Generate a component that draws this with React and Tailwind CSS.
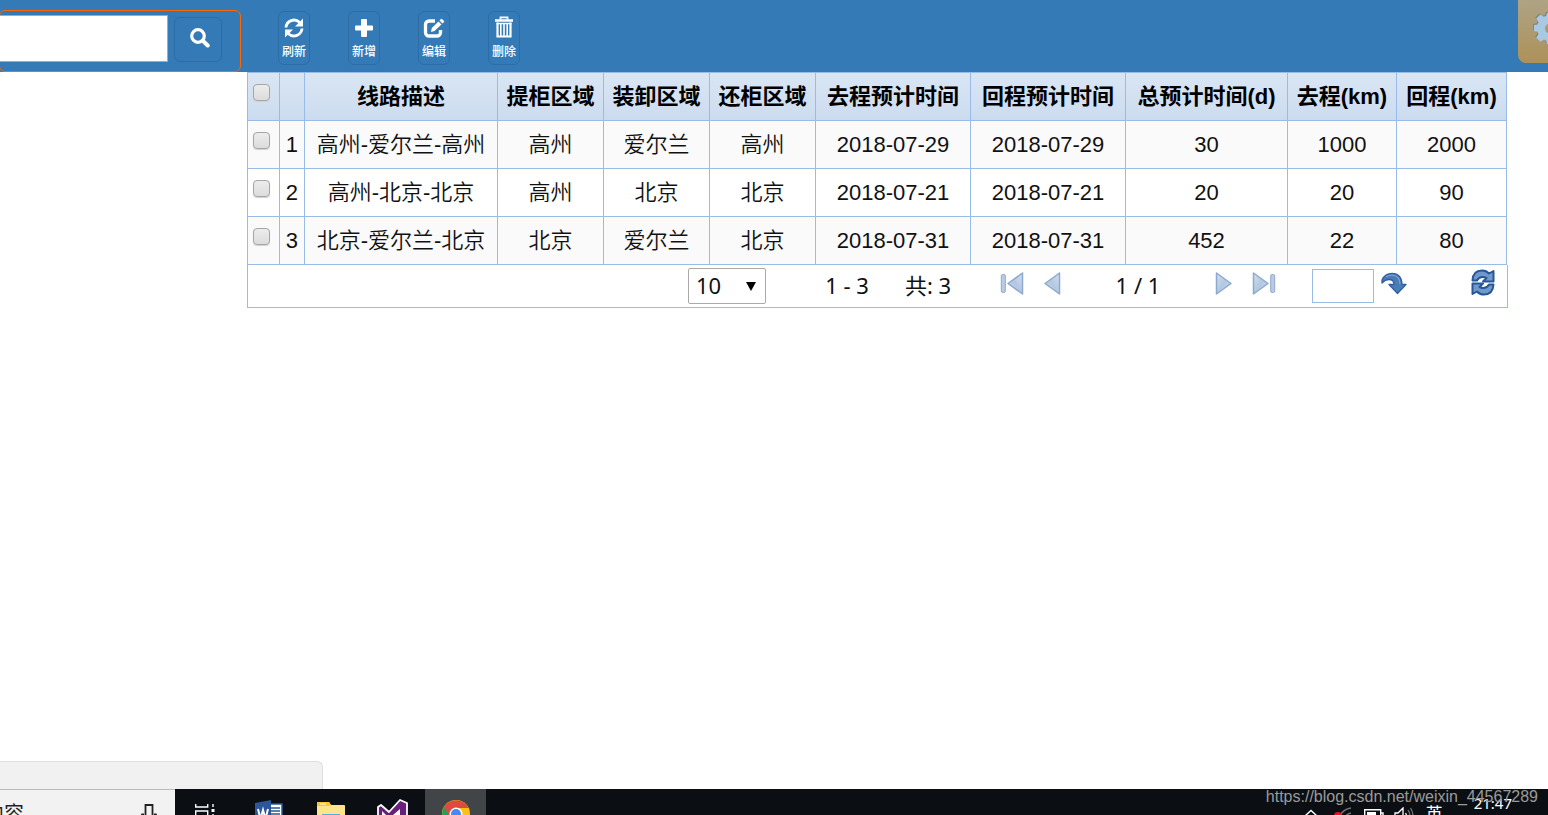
import { useState } from "react";

const COLUMNS = [
  { key: "desc", label: "线路描述", width: 193 },
  { key: "pickup", label: "提柜区域", width: 106 },
  { key: "load", label: "装卸区域", width: 106 },
  { key: "back", label: "还柜区域", width: 106 },
  { key: "goTime", label: "去程预计时间", width: 155 },
  { key: "backTime", label: "回程预计时间", width: 155 },
  { key: "total", label: "总预计时间(d)", width: 162 },
  { key: "goKm", label: "去程(km)", width: 109 },
  { key: "backKm", label: "回程(km)", width: 110 },
];
const TOTAL_WIDTH = 1259;

const ROWS = [
  { id: 1, desc: "高州-爱尔兰-高州", pickup: "高州", load: "爱尔兰", back: "高州", goTime: "2018-07-29", backTime: "2018-07-29", total: 30, goKm: 1000, backKm: 2000 },
  { id: 2, desc: "高州-北京-北京", pickup: "高州", load: "北京", back: "北京", goTime: "2018-07-21", backTime: "2018-07-21", total: 20, goKm: 20, backKm: 90 },
  { id: 3, desc: "北京-爱尔兰-北京", pickup: "北京", load: "爱尔兰", back: "北京", goTime: "2018-07-31", backTime: "2018-07-31", total: 452, goKm: 22, backKm: 80 },
];

const TOOLS = [
  { label: "刷新", Icon: RefreshIcon },
  { label: "新增", Icon: PlusIcon },
  { label: "编辑", Icon: EditIcon },
  { label: "删除", Icon: TrashIcon },
];

export default function App() {
  return (
    <div className="flex min-h-screen flex-col overflow-hidden bg-white font-['Liberation_Sans','Noto_Sans_CJK_SC',sans-serif] text-black">
      <Header />
      <main className="ml-[247px] mr-10 flex-1">
        <RouteTable />
        <Pager />
      </main>
      <div className="h-7 w-[323px] rounded-tr-md border-r border-t border-[#dedede] bg-[#f1f1f1]" />
      <Taskbar />
    </div>
  );
}

function Header() {
  return (
    <header className="flex h-18 items-start bg-[#337ab7]">
      <form className="-ml-px mt-2.5 flex h-[62px] w-[242px] items-start rounded-md border border-[#f60] pt-1" onSubmit={(e) => e.preventDefault()}>
        <input type="text" aria-label="搜索内容" className="h-[47px] w-42 border border-l-0 border-[#a9a9a9] bg-white px-2 text-[22px] outline-none" />
        <button type="submit" aria-label="搜索" className="ml-1.5 mt-0.5 flex h-[45px] w-12 items-start justify-center rounded-md border border-[#2e6da4] pl-1 pt-2.5 text-white">
          <SearchIcon />
        </button>
      </form>
      <div className="ml-[37px] mt-[11px] flex gap-[38px]">
        {TOOLS.map(({ label, Icon }) => (
          <button key={label} type="button" className="flex h-[54px] w-8 flex-col items-center rounded-md border border-[#2e6da4] pt-1.5 text-xs font-medium text-white">
            <Icon />
            <span className="mt-1.5 whitespace-nowrap leading-4">{label}</span>
          </button>
        ))}
      </div>
      <button type="button" aria-label="设置" className="-mr-[34px] ml-auto flex h-[63px] w-16 justify-center rounded-b-lg bg-linear-to-b from-[#aea384] to-[#ad9158] pt-3">
        <GearIcon />
      </button>
    </header>
  );
}

function Check({ label }) {
  return (
    <input type="checkbox" aria-label={label}
      className="block size-[17px] appearance-none rounded-[4px] border border-[#a6a6a6] bg-linear-to-b from-[#ececec] to-[#dcdcdc] shadow-[0_1px_1px_#d0d0d0] checked:bg-[#337ab7]" />
  );
}

function RouteTable() {
  return (
    <div className="pr-px">
      <table className="w-full table-fixed border-collapse text-center text-[22px] leading-8">
        <colgroup>
          <col style={{ width: `${(32 / TOTAL_WIDTH) * 100}%` }} />
          <col style={{ width: `${(25 / TOTAL_WIDTH) * 100}%` }} />
          {COLUMNS.map((c) => <col key={c.key} style={{ width: `${(c.width / TOTAL_WIDTH) * 100}%` }} />)}
        </colgroup>
        <thead>
          <tr className="h-12 bg-linear-to-b from-[#dae6f4] to-[#cbdbef]">
            <th className="border border-[#99bbe8] pl-[5px] pt-[11px] align-top"><Check label="全选" /></th>
            <th className="border border-[#99bbe8]" />
            {COLUMNS.map((c) => <th key={c.key} className="whitespace-nowrap border border-[#99bbe8] font-bold">{c.label}</th>)}
          </tr>
        </thead>
        <tbody>
          {ROWS.map((row) => (
            <tr key={row.id} className="h-12 text-[#111] odd:bg-[#fafafa]">
              <td className="border border-[#99bbe8] pl-[5px] pt-[11px] align-top"><Check label={row.desc} /></td>
              <td className="border border-[#99bbe8]">{row.id}</td>
              {COLUMNS.map((c) => <td key={c.key} className="whitespace-nowrap border border-[#99bbe8] font-[350]">{row[c.key]}</td>)}
            </tr>
          ))}
        </tbody>
      </table>
    </div>
  );
}

function Pager() {
  const [size, setSize] = useState("10");
  return (
    <div className="flex h-[43px] items-start justify-end border-x border-b border-[#99bbe8] pr-3 pt-[3px] font-['Noto_Sans','Noto_Sans_CJK_SC',sans-serif] text-[22px] leading-[34px] text-[#111]">
      <div className="relative">
        <select aria-label="每页条数" value={size} onChange={(e) => setSize(e.target.value)}
          className="h-9 w-[78px] appearance-none rounded-xs border border-[#a9a9a9] bg-white pb-0.5 pl-[7px] leading-8 outline-none">
          <option>10</option>
          <option>20</option>
          <option>50</option>
        </select>
        <svg viewBox="0 0 10 9" className="pointer-events-none absolute right-2.5 top-3.5 h-[9px] w-2.5"><path d="M0 0h10L5 9z" /></svg>
      </div>
      <span className="ml-14 w-[50px] whitespace-nowrap text-center">1 - 3</span>
      <span className="ml-8 w-12 whitespace-nowrap text-center">共: 3</span>
      <button type="button" aria-label="首页" className="ml-12 mt-1"><PageIcon bar flip /></button>
      <button type="button" aria-label="上一页" className="ml-5 mt-1"><PageIcon flip /></button>
      <span className="mx-[53px] w-12 whitespace-nowrap text-center">1 / 1</span>
      <button type="button" aria-label="下一页" className="mt-1"><PageIcon /></button>
      <button type="button" aria-label="末页" className="ml-5 mt-1"><PageIcon bar /></button>
      <input type="text" aria-label="页码" className="ml-9 mt-px h-[34px] w-[62px] border border-[#99bbe8] px-1 outline-none" />
      <button type="button" aria-label="跳转" className="ml-[7px] mt-1"><JumpIcon /></button>
      <button type="button" aria-label="重新加载" className="ml-16 mt-px"><ReloadIcon /></button>
    </div>
  );
}

/** Desktop strip; everything hangs below its lower edge. */
function Taskbar() {
  return (
    <footer className="flex h-[26px] items-start overflow-hidden bg-[#0b0f14] text-white">
      <div className="flex h-full w-[175px] items-start justify-between border-t border-[#b8bcbc] bg-[#f2f2f2] text-[#222]">
        <span className="-ml-4 mt-3 text-[20px] leading-6">内容</span>
        <svg viewBox="0 0 16 24" className="mr-[18px] mt-3.5 h-6 w-4" fill="none" stroke="currentColor" strokeWidth="1.800">
          <path d="M4.500 12V1h7v11M4.500 10v4M.5 10.500h2.500M13 10.500h2.500M1 10v4a7 7 0 0 0 14 0v-4" />
        </svg>
      </div>
      <svg viewBox="0 0 22 20" className="ml-5 mt-3.5 h-5 w-[22px]" fill="none" stroke="#fff" strokeWidth="1.4">
        <path d="M.7 1v3h12V1M.7 19V8h12v11M18 1v3M18 11v8" />
        <path d="M16.5 6h3v3h-3z" fill="#fff" stroke="none" />
      </svg>
      <WordIcon />
      <FolderIcon />
      <StudioIcon />
      <div className="ml-4 flex h-full w-[61px] justify-center bg-[#424548] pt-[11px]"><ChromeIcon /></div>
      <Tray />
    </footer>
  );
}

function Tray() {
  return (
    <div className="relative ml-auto flex h-full items-start pr-9">
      <svg viewBox="0 0 12 8" className="mr-[17px] mt-5 h-2 w-3" fill="none" stroke="#fff" strokeWidth="1.4"><path d="m.5 6.5 5.5-5 5.5 5" /></svg>
      <svg viewBox="0 0 18 18" className="mr-3 mt-[18px] size-[18px]" fill="none" stroke="#777" strokeWidth="1.4">
        <path d="M4 16A15 15 0 0 1 17 1M9 16A10 10 0 0 1 17 6" />
        <circle cx="4" cy="9" r="4" fill="#e81123" stroke="none" />
      </svg>
      <svg viewBox="0 0 20 12" className="mr-2.5 mt-5 h-3 w-5" fill="none" stroke="#fff" strokeWidth="1.4">
        <path d="M.7.7h16v10H.7zM17 4h2v4h-2" />
        <path d="M3 3h9v6H3z" fill="#fff" stroke="none" />
      </svg>
      <svg viewBox="0 0 20 18" className="mr-3 mt-[18px] h-[18px] w-5" fill="none" stroke="#fff" strokeWidth="1.3">
        <path d="M1 6h3l5-5v16l-5-5H1zM11.500 6q2 3 0 6" />
        <path d="M14 3q4 6 0 12M16.500 1q5 8 0 16" stroke="#777" />
      </svg>
      <span className="mr-[31px] mt-3.5 text-[17px] leading-6">英</span>
      <span className="mt-1 font-['Noto_Sans',sans-serif] text-[15px] leading-5">21:47</span>
      <span className="absolute right-2.5 top-0 whitespace-nowrap text-base leading-4 text-[#9b9b9b]">https://blog.csdn.net/weixin_44567289</span>
    </div>
  );
}

function SearchIcon() {
  return (
    <svg viewBox="0 0 20 20" className="size-5" fill="none" stroke="currentColor">
      <circle cx="8" cy="8" r="6.300" strokeWidth="3.200" />
      <path d="m12.800 12.800 4.900 4.700" strokeWidth="4" strokeLinecap="round" />
    </svg>
  );
}

function RefreshIcon() {
  return (
    <svg viewBox="0 0 20 20" className="h-5 w-5 shrink-0" fill="none" stroke="currentColor" strokeWidth="2.8">
      <path d="M2 9.500A8 8 0 0 1 15.500 4.300M18 10.500A8 8 0 0 1 4.500 15.700" />
      <path d="M19 .500V8.500h-8zM1 19.500v-8h8z" fill="currentColor" stroke="none" />
    </svg>
  );
}

function PlusIcon() {
  return (
    <svg viewBox="0 0 20 20" className="h-5 w-5 shrink-0" fill="currentColor">
      <path d="M8 1h4a1 1 0 0 1 1 1v5.500h5a1 1 0 0 1 1 1v3a1 1 0 0 1-1 1h-5V18a1 1 0 0 1-1 1H8a1 1 0 0 1-1-1v-5.500H2a1 1 0 0 1-1-1v-3a1 1 0 0 1 1-1h5V2a1 1 0 0 1 1-1z" />
    </svg>
  );
}

function EditIcon() {
  return (
    <svg viewBox="0 0 22 20" className="h-5 w-[22px] shrink-0">
      <path d="M12 3H6a3.500 3.500 0 0 0-3.500 3.500v8A3.500 3.500 0 0 0 6 18h8a3.500 3.500 0 0 0 3.500-3.500V12" fill="none" stroke="currentColor" strokeWidth="3.300" />
      <path d="m15.500 3.500 3 3-7 6.500-3.500 1 .8-4zM16.500 2.500l1.500-1.500q.5-.5 1 0l2 2q.5.500 0 1l-1.500 1.500z" fill="currentColor" />
    </svg>
  );
}

function TrashIcon() {
  return (
    <svg viewBox="0 0 20 22" className="-mt-0.5 h-[22px] w-5 shrink-0" fill="none" stroke="currentColor">
      <path d="M6.500 3.500V1.300h7v2.200" strokeWidth="1.800" />
      <path d="M1 4.500h18" strokeWidth="2.500" />
      <path d="M3.500 6.500v14h13v-14" strokeWidth="2.200" />
      <path d="M2.600 7.500h14.800" strokeWidth="1.500" />
      <path d="M6.800 7v14M10 7v14M13.200 7v14" strokeWidth="1.600" />
    </svg>
  );
}

function GearIcon() {
  return (
    <svg viewBox="0 0 32 32" className="size-8 drop-shadow-[-1px_-1px_0_#7d8578]" fill="#a9c8e4">
      <path fillRule="evenodd" d="M13 1h6l.8 4.300 2.300 1L25.800 4l4.100 4.200-2.400 3.600 1 2.300L32 15v5l-4 .800-1 2.300 2.300 3.600-4.100 4.100-3.600-2.300-2.300 1L18 32h-5l-.8-3.500-2.300-1-3.600 2.300-4.100-4.100 2.300-3.600-1-2.300L0 19v-6l3.500-.5 1-2.300L2.200 6.600l4.100-4.100 3.600 2.300 2.300-1zM16 11.500a5 5 0 1 0 0 10 5 5 0 0 0 0-10z" />
    </svg>
  );
}

function PageIcon({ bar, flip }) {
  const w = bar ? 24 : 17;
  return (
    <svg width={w} height="24" viewBox={`0 0 ${w} 24`} className={flip ? "-scale-x-100" : ""} stroke="#8fa9cc">
      <defs>
        <linearGradient id="pageFill" x1="0" y1="0" x2="1" y2="1">
          <stop offset="0" stopColor="#d3e0f0" />
          <stop offset=".5" stopColor="#b2c8e2" />
          <stop offset="1" stopColor="#cbdaec" />
        </linearGradient>
      </defs>
      <path d="M1.500 1v21L16 11.500z" fill="url(#pageFill)" strokeWidth="1.500" strokeLinejoin="round" />
      {bar && <rect x="18.700" y="2.500" width="4" height="18" rx="1.500" fill="#b9cce4" />}
    </svg>
  );
}

function JumpIcon() {
  return (
    <svg viewBox="0 0 26 24" className="h-6 w-[26px]">
      <path d="M1 8Q4 1.500 11 1.500q9.500 0 10 11h4L16.500 21.500 8 12.500h5Q13 7.500 8 7.500 4 7.500 1 11z" fill="#4a7cb8" stroke="#30619c" strokeWidth="1.300" strokeLinejoin="round" />
      <path d="M5 4.700Q8 2.800 12 3.200q7 1 7 9" fill="none" stroke="#7ba3d0" strokeWidth="1.300" />
    </svg>
  );
}

function ReloadIcon() {
  return (
    <svg viewBox="0 0 24 27" className="h-[27px] w-6" fill="#7099cb" stroke="#285795" strokeWidth="2" strokeLinejoin="round">
      <path d="M1.500 11.500Q2 1.500 11 1.500q4.500 0 7 3L22.500 2v10.500H12l3.500-3.500Q9 6 6 11.500z" />
      <path d="M22.500 15.500Q22 25.500 13 25.500q-4.500 0-7-3L1.500 25V14.500H12L8.500 18Q15 21 18 15.500z" />
    </svg>
  );
}

function WordIcon() {
  return (
    <svg viewBox="0 0 28 28" className="ml-[38px] mt-[11px] size-7">
      <path d="M14 4h13v20H14z" fill="#fff" stroke="#2b579a" strokeWidth="1.500" />
      <path d="M16 8h9M16 11h9M16 14h9M16 17h9" stroke="#2b579a" strokeWidth="1.300" />
      <path d="M0 3 16 0v28L0 25z" fill="#2b579a" />
      <path d="m3 9 2.500 10L8 10l2.500 9L13 9" fill="none" stroke="#fff" strokeWidth="2" />
    </svg>
  );
}

function FolderIcon() {
  return (
    <svg viewBox="0 0 28 26" className="ml-[34px] mt-[13px] h-[26px] w-7">
      <path d="M0 1q0-1 1-1h11l2 3h13q1 0 1 1v20H0z" fill="#ffe48c" />
      <path d="M0 1q0-1 1-1h11l2 3-2 1H0z" fill="#fdc52f" />
      <path d="M3 1.500h6v1H3z" fill="#fff" />
      <path d="M5 12h18v12H5z" fill="#45b5e6" />
    </svg>
  );
}

function StudioIcon() {
  return (
    <svg viewBox="0 0 32 32" className="ml-[32px] mt-2.5 size-8">
      <path d="m1 8 3-2 8 7L23 1l7 3v24l-7 3-11-12-8 7-3-2z" fill="#68217a" stroke="#fff" strokeWidth="1.800" strokeLinejoin="round" />
      <path d="M23 10v12l-7-6zM5 12v8l4-4z" fill="#fff" />
    </svg>
  );
}

function ChromeIcon() {
  return (
    <svg viewBox="0 0 28 28" className="size-7">
      <circle cx="14" cy="14" r="14" fill="#fbc116" />
      <path d="M14 14 2 7a14 14 0 0 0 5 19z" fill="#1da25a" />
      <path d="M2 7a14 14 0 0 1 24.500 1H14L8 17z" fill="#dd4b3e" />
      <circle cx="14" cy="14" r="6.500" fill="#fff" />
      <circle cx="14" cy="14" r="5" fill="#4688f4" />
    </svg>
  );
}
